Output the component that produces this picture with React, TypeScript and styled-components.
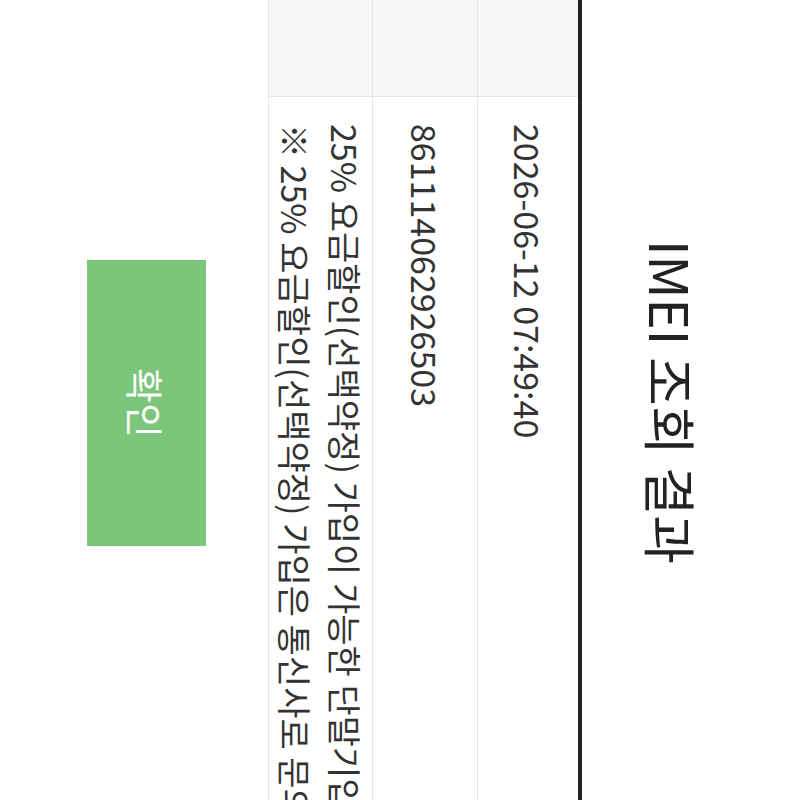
import React from "react";
import styled, { createGlobalStyle } from "styled-components";

const GlobalStyle = createGlobalStyle`
  html, body {
    margin: 0;
    padding: 0;
    background: #ffffff;
    overflow: hidden;
  }
  * {
    box-sizing: border-box;
  }
`;

const Stage = styled.div`
  width: 800px;
  height: 800px;
  overflow: hidden;
  background: #ffffff;
`;

// the whole dialog is shown turned a quarter clockwise
const Turned = styled.div`
  width: 800px;
  height: 800px;
  transform: rotate(90deg);
  transform-origin: 50% 50%;
  display: flex;
  flex-direction: column;
  font-family: "Noto Sans CJK KR", "Noto Sans", sans-serif;
  color: #333333;
`;

const Header = styled.div`
  height: 222px;
  padding-top: 92px;
  padding-left: 4px;
  border-bottom: 4px solid #222222;
  display: flex;
  justify-content: center;
`;

const Title = styled.h1`
  margin: 0;
  font-size: 53px;
  line-height: 72px;
  font-weight: 400;
  color: #222222;
  white-space: nowrap;
`;

const Table = styled.div`
  display: flex;
  flex-direction: column;
`;

const Row = styled.div<{ $height: number }>`
  display: flex;
  height: ${(p) => p.$height}px;
  border-bottom: 1px solid #e6e6e6;
`;

const HeadCell = styled.div`
  width: 97px;
  flex: none;
  background: #f6f6f6;
  border-right: 1px solid #e6e6e6;
`;

const ValueCell = styled.div`
  flex: 1;
  padding-left: 27px;
  display: flex;
  flex-direction: column;
  justify-content: center;
  font-size: 34px;
  line-height: 50px;
  white-space: nowrap;
`;

const Footer = styled.div`
  display: flex;
  justify-content: center;
  padding-top: 62px;
  padding-left: 6px;
`;

const ConfirmButton = styled.button`
  width: 286px;
  height: 119px;
  border: none;
  background: #7cc67c;
  color: #ffffff;
  font-family: "Noto Sans CJK KR", "Noto Sans", sans-serif;
  font-size: 38px;
  cursor: pointer;
`;

const rows = [
  { height: 101, lines: ["2026-06-12 07:49:40"] },
  { height: 105, lines: ["861114062926503"] },
  {
    height: 104,
    lines: [
      "25% 요금할인(선택약정) 가입이 가능한 단말기입니다.",
      "※ 25% 요금할인(선택약정) 가입은 통신사로 문의하시기 바랍니다.",
    ],
  },
];

export default function App() {
  return (
    <Stage>
      <GlobalStyle />
      <Turned>
        <Header>
          <Title>IMEI 조회 결과</Title>
        </Header>
        <Table>
          {rows.map((row, i) => (
            <Row key={i} $height={row.height}>
              <HeadCell />
              <ValueCell>
                {row.lines.map((line) => (
                  <span key={line}>{line}</span>
                ))}
              </ValueCell>
            </Row>
          ))}
        </Table>
        <Footer>
          <ConfirmButton>확인</ConfirmButton>
        </Footer>
      </Turned>
    </Stage>
  );
}
